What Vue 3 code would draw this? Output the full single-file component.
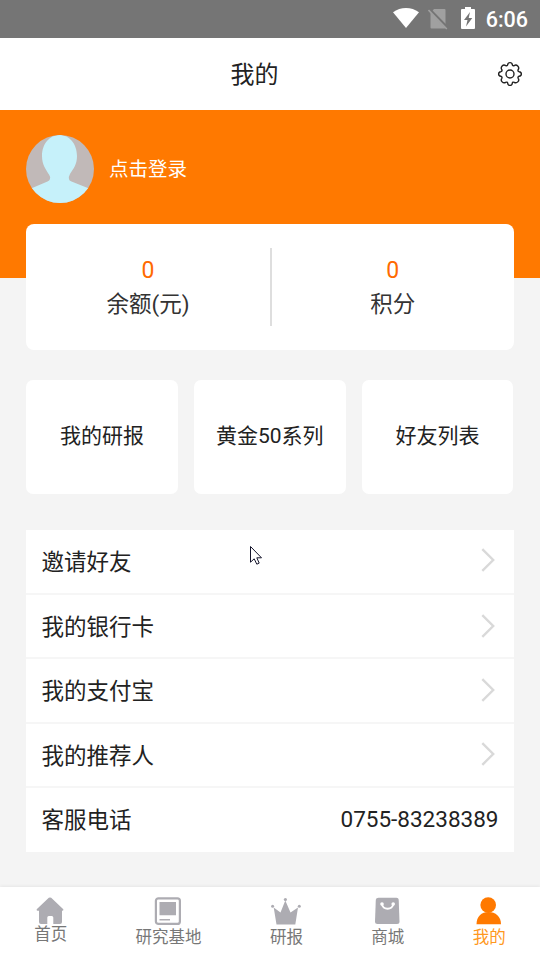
<script setup>
const stats = [
  { value: '0', label: '余额(元)' },
  { value: '0', label: '积分' },
]
const shortcuts = ['我的研报', '黄金50系列', '好友列表']
const rows = [
  { label: '邀请好友' },
  { label: '我的银行卡' },
  { label: '我的支付宝' },
  { label: '我的推荐人' },
  { label: '客服电话', value: '0755-83238389' },
]
const tabs = [
  { id: 'home', label: '首页' },
  { id: 'base', label: '研究基地' },
  { id: 'report', label: '研报' },
  { id: 'shop', label: '商城' },
  { id: 'mine', label: '我的', active: true },
]
</script>

<template>
  <div class="screen">
    <div class="status">
      <svg class="wifi" width="28" height="22" viewBox="0 0 28 22"><path d="M1 5.3C8.5-.4 19.5-.4 27 5.3L14 21Z" fill="#fff" /></svg>
      <svg class="sim" width="20" height="22" viewBox="0 0 20 22">
        <path d="M6 1h10.5q1 0 1 1v17.5q0 1-1 1H3.500q-1 0-1-1V5Z" fill="#a0a0a0" />
        <path d="M1.300 1.200 20 20.500" stroke="#757575" stroke-width="3" />
        <path d="M.5 2 18.800 21" stroke="#a0a0a0" stroke-width="1.600" />
      </svg>
      <svg class="battery" width="14" height="22" viewBox="0 0 14 22">
        <path d="M4 0h6v2h3q1 0 1 1v18q0 1-1 1H1q-1 0-1-1V3q0-1 1-1h3Z" fill="#fff" />
        <path d="M9 5 3 13h3.500L5 19.500 11.300 11H7.700Z" fill="#757575" />
      </svg>
      <span class="clock">6:06</span>
    </div>

    <header class="header">
      <h1 class="title">我的</h1>
      <svg class="gear" width="26" height="26" viewBox="0 0 26 26" fill="none" stroke="#222" stroke-width="1.400" stroke-linejoin="round">
        <path d="M10.700 3.700C11 .9 15 .9 15.300 3.700Q15.600 5.300 17.200 4.600C19.600 2.900 22.900 5.900 21.200 8.600Q20.500 10.200 22.100 10.700C25.100 11 25.100 15 22.100 15.300Q20.500 15.700 21.200 17.300C22.900 19.900 19.800 22.900 17.200 21.300Q15.600 20.600 15.300 22.200C15 25.100 11 25.100 10.700 22.200Q10.300 20.600 8.700 21.300C6.100 22.900 3.100 19.900 4.800 17.300Q5.500 15.700 3.800 15.300C.9 15 .9 11 3.800 10.700Q5.500 10.200 4.800 8.600C3.100 5.900 6.100 2.900 8.700 4.600Q10.300 5.300 10.700 3.700Z" />
        <circle cx="13" cy="13" r="4" />
      </svg>
    </header>

    <section class="hero">
      <svg class="avatar" width="68" height="68" viewBox="0 0 68 68">
        <defs><clipPath id="avatar-clip"><circle cx="34" cy="34" r="34" /></clipPath></defs>
        <g clip-path="url(#avatar-clip)">
          <rect width="68" height="68" fill="#c1b9b8" />
          <path d="M33.500 0C23.500 0 16 9 16 21C16 30 20 34.500 23 39.500Q24.500 41.500 24 44Q23.500 45.500 21.500 46.500L5 53.500V68H63V53.500L45.500 46.500Q43 45.500 43 44Q42.500 41.500 44 39C47.500 33.500 51 29.500 51 21C51 9 43.500 0 33.500 0Z" fill="#c6f1fa" />
        </g>
      </svg>
      <span class="login">点击登录</span>
    </section>

    <section class="stats">
      <div v-for="item in stats" :key="item.label" class="stat">
        <span class="number">{{ item.value }}</span>
        <span class="caption">{{ item.label }}</span>
      </div>
    </section>

    <section class="shortcuts">
      <div v-for="name in shortcuts" :key="name" class="shortcut">{{ name }}</div>
    </section>

    <section class="list">
      <div v-for="row in rows" :key="row.label" class="row">
        <span>{{ row.label }}</span>
        <span v-if="row.value" class="phone">{{ row.value }}</span>
        <svg v-else class="chevron" width="14" height="24" viewBox="0 0 14 24"><path d="M1.300 1.200 12.200 12 1.300 22.800" fill="none" stroke="#d9d9d9" stroke-width="2.400" /></svg>
      </div>
      <svg class="cursor" width="14" height="21" viewBox="0 0 14 21"><path d="M1.500 1.500V17.200L5.200 13.800 7.800 19.200 10.200 18.100 7.800 12.800H12.500Z" fill="#fff" stroke="#15152b" stroke-width="1" /></svg>
    </section>

    <nav class="tabs">
      <div v-for="tab in tabs" :key="tab.id" class="tab" :class="[tab.id, { active: tab.active }]">
        <svg class="icon" width="30" height="28" viewBox="0 0 30 28" fill="#adacb2">
          <path v-if="tab.id === 'home'" d="M12.800.8Q14 0 15.200.8L27.300 12.200Q27.800 13.500 26.500 13.700H26V25Q26 27 24 27H17.300V20.500Q17.300 19 15.800 19H12.800Q11.300 19 11.300 20.500V27H5Q3 27 3 25V13.700H1.500Q.2 13.500.7 12.200Z" />
          <template v-else-if="tab.id === 'base'">
            <rect x="1.900" y="1.300" width="24" height="25.600" rx="2.500" fill="none" stroke="#adacb2" stroke-width="2.200" />
            <path d="M5.500 5H22V18.200H5.500ZM5.500 22H16V23.500H5.500Z" />
          </template>
          <template v-else-if="tab.id === 'report'">
            <path d="M2.700 10.500 9.500 15.500 14.300 3.500 19.500 15.500 27 10.500 24.300 27.500H5.500Z" />
            <circle cx="1.600" cy="9.300" r="1.500" /><circle cx="14.400" cy="2.500" r="1.600" /><circle cx="28.300" cy="9.300" r="1.500" />
          </template>
          <template v-else-if="tab.id === 'shop'">
            <path d="M5.500.8H23.500Q25.500.8 25.700 2.800L26.500 24.500Q26.500 27 24 27H4.500Q2 27 2 24.500L2.800 2.800Q3 .8 5.500.8Z" />
            <path d="M9 6.800C9.200 13.500 20 13.500 20.200 6.800" fill="none" stroke="#fff" stroke-width="2" />
            <circle cx="9" cy="7" r="1.800" fill="#fff" /><circle cx="20.200" cy="7" r="1.800" fill="#fff" />
          </template>
          <g v-else fill="#ff7900">
            <circle cx="14.200" cy="8" r="7.800" />
            <path d="M2.500 27.200C2.500 19.500 7.500 15 14.500 15S27 19.500 27 27.200Z" />
          </g>
        </svg>
        <span class="tab-label">{{ tab.label }}</span>
      </div>
    </nav>
  </div>
</template>

<style>
body { margin: 0; background: #f4f4f4; }
</style>

<style scoped>
.screen {
  display: flex;
  flex-direction: column;
  box-sizing: border-box;
  width: 540px;
  height: 960px;
  overflow: hidden;
  background: #f4f4f4;
  color: #222;
  font-family: Roboto, "Noto Sans CJK SC", sans-serif;
}
.status {
  display: flex;
  flex: none;
  align-items: flex-start;
  justify-content: flex-end;
  box-sizing: border-box;
  height: 38px;
  padding: 7px 12px 0 0;
  background: #757575;
}
.sim { margin: 1px 0 0 8px; }
.battery { margin-left: 13px; }
.clock {
  margin-left: 11px;
  color: #fff;
  font-size: 21.500px;
  font-weight: 500;
  line-height: 26px;
}
.header {
  display: flex;
  flex: none;
  align-items: center;
  box-sizing: border-box;
  height: 72px;
  padding: 0 17px 0 12px;
  background: #fff;
}
.title {
  flex: 1;
  margin: 0;
  padding: 1px 0 0;
  font-size: 24px;
  font-weight: 400;
  line-height: 36px;
  text-align: center;
}
.hero {
  display: flex;
  flex: none;
  align-items: flex-start;
  box-sizing: border-box;
  height: 168px;
  padding: 25px 26px 0;
  background: #ff7900;
}
.login {
  margin-left: 15px;
  color: #fff;
  font-size: 19.500px;
  line-height: 69px;
}
.stats {
  position: relative;
  display: flex;
  flex: none;
  align-items: center;
  width: 487.500px;
  height: 126px;
  margin: -54px 0 0 26px;
  border-radius: 8px;
  background: #fff;
}
.stat {
  display: flex;
  flex: 1;
  flex-direction: column;
  align-items: center;
  box-sizing: border-box;
  height: 78px;
  padding-top: 6px;
}
.stat:first-child {
  flex: 0 0 246px;
  border-right: 2px solid #dedede;
}
.number {
  color: #ff6a00;
  font-size: 23px;
  line-height: 34px;
}
.caption {
  color: #333;
  font-size: 22.500px;
  line-height: 32px;
}
.shortcuts {
  display: flex;
  flex: none;
  gap: 16px;
  margin: 30px 26.500px 0 26px;
}
.shortcut {
  flex: 1;
  height: 114px;
  border-radius: 7px;
  background: #fff;
  font-size: 21px;
  line-height: 113px;
  text-align: center;
}
.list {
  position: relative;
  flex: none;
  width: 487.500px;
  margin: 36px 0 0 26px;
}
.row {
  display: flex;
  align-items: center;
  justify-content: space-between;
  box-sizing: border-box;
  height: 64.300px;
  padding: 0 15px 2px 15.500px;
  border-bottom: 2px solid #f6f6f6;
  background: #fff;
  font-size: 22.500px;
}
.row:first-child {
  height: 65px;
  padding-bottom: 4px;
}
.row:last-of-type {
  height: 64px;
  border-bottom-color: #fff;
}
.phone { padding-top: 3px; }
.chevron { margin: 1px 4px 0 0; }
.cursor {
  position: absolute;
  top: 15px;
  left: 223px;
}
.tabs {
  display: flex;
  flex: none;
  justify-content: space-around;
  height: 73px;
  margin-top: auto;
  background: #fff;
  box-shadow: 0 -1px 3px rgba(0, 0, 0, 0.06);
}
.tab {
  display: flex;
  flex-direction: column;
  align-items: center;
  padding-top: 10px;
}
.icon { flex: none; }
.tab-label {
  color: #777;
  font-size: 16.500px;
  line-height: 26px;
}
.home .tab-label { margin-top: -3px; }
.active .tab-label { color: #ff9820; }
</style>
